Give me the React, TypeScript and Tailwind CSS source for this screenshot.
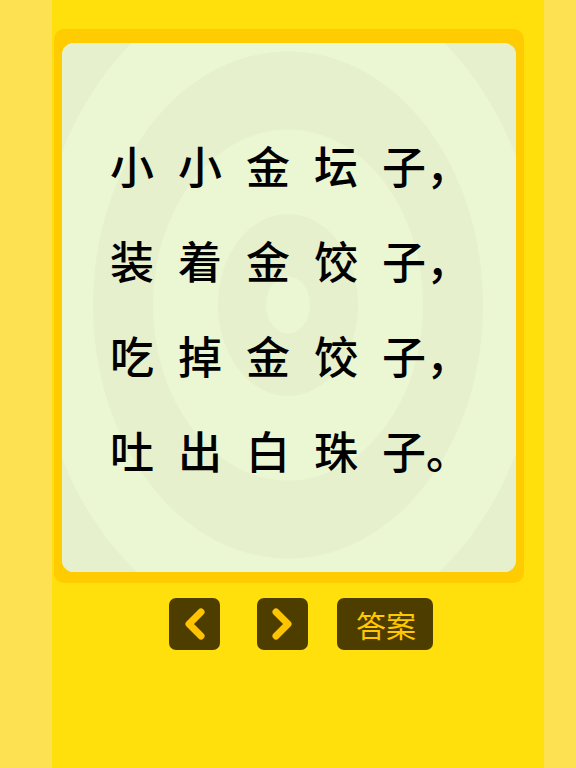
const lines = [
  ["小", "小", "金", "坛", "子", "，"],
  ["装", "着", "金", "饺", "子", "，"],
  ["吃", "掉", "金", "饺", "子", "，"],
  ["吐", "出", "白", "珠", "子", "。"],
];

const cjk = { fontFamily: '"Noto Sans CJK SC", "Noto Sans", sans-serif' };

// faint concentric rings behind the rhyme
function Rings() {
  const radii = [320, 255, 195, 135, 70, 22];
  return (
    <svg
      className="absolute inset-0 w-full h-full"
      viewBox="0 0 454 529"
      preserveAspectRatio="none"
    >
      {radii.map((r, i) => (
        <ellipse
          key={r}
          cx={226}
          cy={262}
          rx={r}
          ry={r * 1.3}
          fill={i % 2 === 0 ? "#e6f0cd" : "#ebf6d2"}
        />
      ))}
    </svg>
  );
}

function Chevron({ dir }: { dir: "left" | "right" }) {
  const pts = dir === "left" ? "32,14 20,26 32,38" : "19,14 31,26 19,38";
  return (
    <svg width="51" height="52" viewBox="0 0 51 52">
      <polyline
        points={pts}
        fill="none"
        stroke="#ffc400"
        strokeWidth="7"
        strokeLinecap="round"
        strokeLinejoin="round"
      />
    </svg>
  );
}

export default function App() {
  return (
    <div className="flex w-full h-[768px] bg-[#fde152] overflow-hidden" style={cjk}>
      <div className="ml-[52px] w-[492px] h-full bg-[#ffe00c] flex flex-col">
        <div className="mt-[29px] ml-[2px] w-[470px] h-[554px] rounded-[10px] bg-[#ffcc02] pt-[14px] px-[8px] pb-[11px]">
          <div className="relative h-full rounded-[12px] overflow-hidden bg-[#ebf6d2]">
            <Rings />
            <div className="relative h-full flex flex-col items-center justify-center gap-[51px] pl-[2px]">
              {lines.map((line, i) => (
                <div key={i} className="flex text-[44px] leading-[44px] font-medium text-black">
                  {line.map((ch, j) => (
                    <span
                      key={j}
                      className={
                        j === 0 ? "w-[44px]" : j === 5 ? "w-[44px]" : "w-[44px] ml-[24px]"
                      }
                    >
                      {ch}
                    </span>
                  ))}
                </div>
              ))}
            </div>
          </div>
        </div>

        <div className="flex mt-[15px] pl-[117px]">
          <button className="w-[51px] h-[52px] rounded-[7px] bg-[#4d3e00] flex items-center justify-center">
            <Chevron dir="left" />
          </button>
          <button className="ml-[37px] w-[51px] h-[52px] rounded-[7px] bg-[#4d3e00] flex items-center justify-center">
            <Chevron dir="right" />
          </button>
          <button className="ml-[29px] w-[96px] h-[52px] rounded-[7px] bg-[#4d3e00] flex items-center justify-center text-[30px] leading-none text-[#ffc800] pl-[2px]">
            答案
          </button>
        </div>
      </div>
    </div>
  );
}
